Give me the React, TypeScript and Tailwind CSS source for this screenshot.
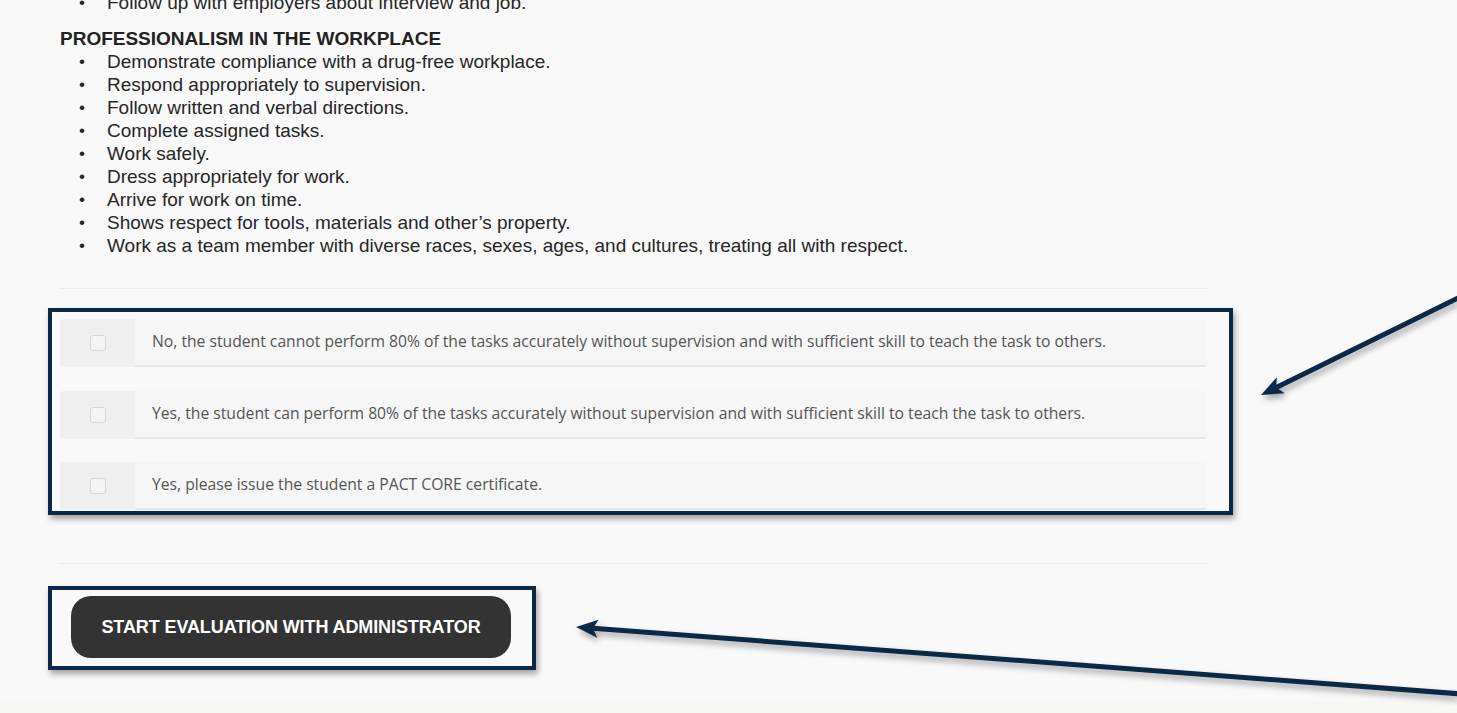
import React from "react";

const skills = [
  "Demonstrate compliance with a drug-free workplace.",
  "Respond appropriately to supervision.",
  "Follow written and verbal directions.",
  "Complete assigned tasks.",
  "Work safely.",
  "Dress appropriately for work.",
  "Arrive for work on time.",
  "Shows respect for tools, materials and other\u2019s property.",
  "Work as a team member with diverse races, sexes, ages, and cultures, treating all with respect.",
];

const choices = [
  "No, the student cannot perform 80% of the tasks accurately without supervision and with sufficient skill to teach the task to others.",
  "Yes, the student can perform 80% of the tasks accurately without supervision and with sufficient skill to teach the task to others.",
  "Yes, please issue the student a PACT CORE certificate.",
];

function Arrow({ x1, y1, x2, y2 }: { x1: number; y1: number; x2: number; y2: number }) {
  const a = Math.atan2(y2 - y1, x2 - x1);
  const len = 22;
  const w = 9;
  const bx = x2 - Math.cos(a) * len;
  const by = y2 - Math.sin(a) * len;
  const px = -Math.sin(a) * w;
  const py = Math.cos(a) * w;
  const nx = x2 - Math.cos(a) * (len - 5);
  const ny = y2 - Math.sin(a) * (len - 5);
  return (
    <g>
      <line x1={x1} y1={y1} x2={nx} y2={ny} stroke="#0c2847" strokeWidth={5} />
      <polygon
        points={`${x2},${y2} ${bx + px},${by + py} ${nx},${ny} ${bx - px},${by - py}`}
        fill="#0c2847"
      />
    </g>
  );
}

function Bullet({ children }: { children: React.ReactNode }) {
  return (
    <li className="flex h-[23px] items-start">
      <span className="w-[28px] shrink-0 text-[17px] leading-[23px]">•</span>
      <span>{children}</span>
    </li>
  );
}

export default function App() {
  return (
    <div className="relative h-[713px] w-[1457px] overflow-hidden bg-[#f9f9f9] font-['Liberation_Sans',Arial,sans-serif]">
      <div className="w-[1147px] ml-[60px] -mt-[9px]">
        <ul className="pl-[19px] text-[19px] leading-[23px] text-[#262626]">
          <Bullet>Follow up with employers about interview and job.</Bullet>
        </ul>
        <h3 className="mt-[14px] text-[19px] leading-[22px] font-bold text-[#222]">
          PROFESSIONALISM IN THE WORKPLACE
        </h3>
        <ul className="pl-[19px] text-[19px] leading-[23px] text-[#262626]">
          {skills.map((s) => (
            <Bullet key={s}>{s}</Bullet>
          ))}
        </ul>

        <div className="mt-[31px] h-px bg-[#ebebeb]" />

        <div className="mt-[30px] flex flex-col gap-[23.5px] font-['Open_Sans',sans-serif]">
          {choices.map((c) => (
            <div key={c} className="flex h-[48px] rounded-[4px]">
              <div className="flex w-[75px] items-center justify-center rounded-l-[4px] bg-[#efefef]">
                <span className="block h-[16px] w-[16px] rounded-[3px] border border-[#d6d6d6] bg-[#f4f4f4]" />
              </div>
              <div className="flex flex-1 items-center rounded-r-[4px] border-b-2 border-[#e6e6e6] bg-[#f6f6f6] pl-[17px] text-[15.7px] text-[#545454]">
                {c}
              </div>
            </div>
          ))}
        </div>

        <div className="mt-[53px] h-px bg-[#ebebeb]" />

        <button className="mt-[32px] ml-[11px] flex h-[62px] w-[440px] items-center justify-center rounded-[20px] bg-[#333333] text-[18px] font-bold tracking-[-0.1px] text-white">
          START EVALUATION WITH ADMINISTRATOR
        </button>
      </div>

      <div className="absolute bottom-0 left-0 h-[11px] w-full bg-[#f7f7f3]" />

      {/* annotation overlays */}
      <div className="absolute left-[48px] top-[308px] h-[207px] w-[1185px] border-4 border-[#0c2847] shadow-[2px_4px_6px_rgba(0,0,0,0.35)]" />
      <div className="absolute left-[48px] top-[586px] h-[84px] w-[488px] border-4 border-[#0c2847] shadow-[2px_4px_6px_rgba(0,0,0,0.35)]" />
      <svg
        className="absolute left-0 top-0"
        width={1457}
        height={713}
        style={{ filter: "drop-shadow(2px 4px 3px rgba(0,0,0,0.35))" }}
      >
        <Arrow x1={1462} y1={296} x2={1261} y2={395} />
        <Arrow x1={1462} y1={694} x2={576} y2={627} />
      </svg>
    </div>
  );
}
